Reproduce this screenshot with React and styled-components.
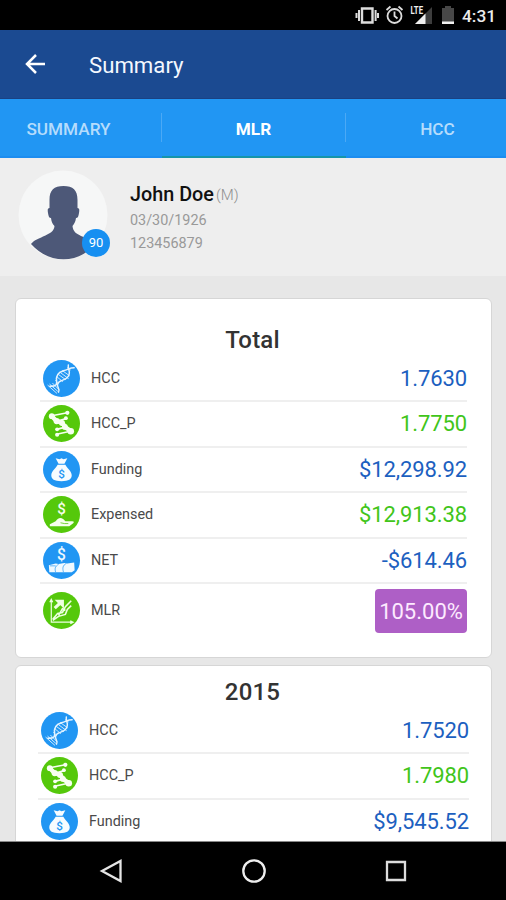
import styled, { createGlobalStyle } from "styled-components";

const GlobalStyle = createGlobalStyle`
  * {
    box-sizing: border-box;
  }

  body {
    margin: 0;
    background: #000;
    font-family: Roboto, 'Liberation Sans', sans-serif;
  }
`;

const Screen = styled.div`
  display: flex;
  flex-direction: column;
  width: 506px;
  height: 900px;
  overflow: hidden;
  background: #e7e7e7;
`;

const StatusBar = styled.div`
  display: flex;
  flex: none;
  justify-content: flex-end;
  height: 30px;
  padding-right: 10px;
  background: #000;
`;

const Clock = styled.span`
  width: 34px;
  color: #ececec;
  font-size: 17.3px;
  font-weight: 500;
  line-height: 32px;
  white-space: nowrap;
`;

const AppBar = styled.header`
  display: flex;
  flex: none;
  align-items: center;
  height: 69px;
  padding-left: 25px;
  background: #1b4a91;
  border-bottom: 1px solid #1a4283;
`;

const AppTitle = styled.h1`
  margin: 2px 0 0 43px;
  color: #f4f8ff;
  font-size: 22.2px;
  font-weight: 400;
`;

const Tabs = styled.nav`
  display: grid;
  flex: none;
  grid-template-columns: 162px 184px 1fr;
  height: 59px;
  background: #2196f3;
`;

const Tab = styled.button`
  display: flex;
  align-items: center;
  justify-content: center;
  padding: ${(props) => props.$pad || "2px 1px 0 0"};
  border: none;
  border-bottom: 2px solid ${(props) => (props.$active ? "#1695a9" : "#1c8df0")};
  background: linear-gradient(#4ba9f5, #4ba9f5) right 14px / 1px 29px no-repeat;
  background-size: ${(props) => (props.$last ? "0 0" : "1px 29px")};
  color: ${(props) => (props.$active ? "#fff" : "#b5dcfc")};
  font-family: inherit;
  font-size: 17.2px;
  font-weight: ${(props) => (props.$active ? 700 : 500)};
`;

const Profile = styled.section`
  display: flex;
  flex: none;
  height: 118px;
  padding: 12px 0 0 18px;
  background: #eee;
`;

const Avatar = styled.div`
  position: relative;
  width: 90px;
  height: 90px;
`;

const Badge = styled.span`
  position: absolute;
  left: 64px;
  top: 59px;
  width: 28px;
  height: 28px;
  border-radius: 50%;
  background: #168ff1;
  color: #fff;
  font-size: 13px;
  font-weight: 400;
  line-height: 28px;
  text-align: center;
`;

const Person = styled.div`
  display: flex;
  flex-direction: column;
  padding: 12px 0 0 22px;
`;

const Name = styled.strong`
  margin-bottom: 1px;
  color: #111;
  font-size: 19.8px;
  font-weight: 500;
  line-height: 26px;
  white-space: nowrap;
`;

const Gender = styled.span`
  margin-left: 2px;
  color: #8e8e8e;
  font-size: 15px;
  font-weight: 300;
  vertical-align: 1px;
`;

const Detail = styled.span`
  color: #999;
  font-size: 14.4px;
  font-weight: 400;
  line-height: 23px;
`;

const Cards = styled.main`
  display: flex;
  flex: 1;
  flex-direction: column;
  gap: 7px;
  min-height: 0;
  padding: 22px 14px 0 15px;
  overflow: hidden;
  border-bottom: 1px solid #888;
`;

const Card = styled.section`
  flex: none;
  height: 360px;
  padding: ${(props) => (props.$wide ? "10px 22px 0 22px" : "25px 24px 0 24px")};
  border: 1px solid #d6d6d6;
  border-radius: 6px;
  background: #fff;
`;

const CardTitle = styled.h2`
  margin: 0;
  padding-right: 2px;
  color: #333;
  font-size: 24px;
  font-weight: 500;
  line-height: 33px;
  text-align: center;
  letter-spacing: 0.2px;
`;

const Row = styled.div`
  display: flex;
  align-items: center;
  height: ${(props) => (props.$last ? 53 : 45.6)}px;
  padding-left: 3px;
  border-bottom: ${(props) => (props.$last ? 0 : 2)}px solid #efefef;

  h2 + & {
    height: 45px;
  }
`;

const Disc = styled.svg`
  flex: none;
  width: 37px;
  height: 37px;
`;

const Label = styled.span`
  flex: 1;
  margin-left: 11px;
  color: #4a4a4a;
  font-size: 14.4px;
`;

const Value = styled.span`
  color: ${(props) => (props.$green ? "#41c51a" : "#1c60c0")};
  font-size: 22px;
  letter-spacing: -0.1px;
`;

const Ratio = styled.span`
  width: 92px;
  height: 44px;
  border-radius: 4px;
  background: #ae5fc6;
  color: #fdeaff;
  font-size: 22px;
  line-height: 45px;
  text-align: center;
`;

const NavBar = styled.footer`
  display: flex;
  flex: none;
  align-items: center;
  justify-content: space-between;
  height: 58px;
  padding: 0 98px 0 99px;
  background: #000;
`;

function Dna() {
  return (
    <g fill="none" stroke="#e3f3ff" strokeLinecap="round">
      <path strokeWidth="1.5" d="M26 5c-1 5 4 8-1 13-4 4-9 2-10 7-1 3 3 5 1 8M32 8c-5 0-6 2-11 3-7 2-8 7-7 12 0 4-3 4-7 4" />
      <path strokeWidth=".9" d="m25 8 3 2m-8 1 7 5m-9-3 8 6m-10-4 7 5m-9-3 6 5m-7-1 2 2m-5 1 6 6m-9-5 8 7m-10-6 9 8" />
    </g>
  );
}

function Genes() {
  return (
    <g fill="#f7fff1" stroke="#f7fff1" strokeWidth="1.7">
      <path fill="none" d="m9 11 16-3M13 17l11-3M14 25l8-2M14 30l14-3" />
      <path fill="none" strokeWidth="4.400" d="m9 11.500 5 5 6 2 3 4.500 6 4" />
      <g stroke="none">
        <circle cx="9" cy="11.500" r="3" />
        <circle cx="25" cy="8" r="2.2" />
        <circle cx="14" cy="16.500" r="3.2" />
        <circle cx="23.500" cy="13.5" r="2" />
        <circle cx="19.500" cy="18.500" r="3" />
        <circle cx="22.500" cy="22.500" r="3" />
        <circle cx="28.500" cy="27" r="3.400" />
        <circle cx="14.500" cy="25" r="2" />
        <circle cx="14.500" cy="30.5" r="2.1" />
      </g>
    </g>
  );
}

function MoneyBag() {
  return (
    <>
      <path fill="#f7fcff" d="m13 7.500 4 1 2-1 2 1 4-1-3 5.500h-6zM15 14h8c1 3 6.500 6 6.500 11 0 4-3 6-10.500 6S8.500 29 8.500 25c0-5 5.500-8 6.500-11" />
      <text x="19" y="27.5" fill="#2196f3" fontSize="12" fontWeight="500" textAnchor="middle">$</text>
    </>
  );
}

function Hand() {
  return (
    <>
      <text x="19" y="18.5" fill="#f5ffed" fontSize="15.500" fontWeight="500" textAnchor="middle">$</text>
      <path fill="#f5ffed" d="m7 29 6-3c3-4 5-4 8-2l2 2h7c2 0 2 1 1 2l-4 3H7z" />
      <path fill="none" stroke="#55c80b" strokeWidth=".8" d="m18 27.500 4 .8h4" />
    </>
  );
}

function Bills() {
  return (
    <>
      <text x="19" y="18" fill="#f0f9ff" fontSize="16" fontWeight="500" textAnchor="middle">$</text>
      <path fill="#f0f9ff" d="m6 24 7-2 3 .5 6-1 3 .5 7-1 .5 8-3 2H6.500z" />
      <path fill="none" stroke="#2196f3" strokeWidth=".7" d="M16 23c-4 2-4 5-3 8m11-9c-4 2-4 5-3 9M7 24.500h6" />
    </>
  );
}

function Growth() {
  return (
    <g fill="none" stroke="#edffe1">
      <path strokeWidth="1.2" d="M8.5 8v23H30M7 10.500l1.500-3 1.500 3m18 19 3 1.500-3 1.500" />
      <path strokeWidth="3.300" d="m12 16.500 6-5.500" />
      <path fill="#edffe1" stroke="none" d="M12 8h9.500v9l-3-3-3.500-3z" />
      <path strokeWidth="1.600" d="m10 28 5-6 5-1 3-6 6-6M10 29l6-4 7-2 2-5 4-4M16 24l4-7 3 2" />
    </g>
  );
}

const glyphs = {
  HCC: Dna,
  HCC_P: Genes,
  Funding: MoneyBag,
  Expensed: Hand,
  NET: Bills,
  MLR: Growth,
};

const total = [
  ["HCC", "1.7630"],
  ["HCC_P", "1.7750"],
  ["Funding", "$12,298.92"],
  ["Expensed", "$12,913.38"],
  ["NET", "-$614.46"],
  ["MLR", "105.00%"],
];

const year = [
  ["HCC", "1.7520"],
  ["HCC_P", "1.7980"],
  ["Funding", "$9,545.52"],
];

function Metrics({ rows }) {
  return rows.map(([label, value], i) => {
    const Glyph = glyphs[label];
    const green = i % 2 === 1;
    const isRatio = label === "MLR";

    return (
      <Row key={label} $last={isRatio}>
        <Disc viewBox="0 0 38 38">
          <circle cx="19" cy="19" r="19" fill={green ? "#55c80b" : "#2196f3"} />
          <Glyph />
        </Disc>
        <Label>{label}</Label>
        {isRatio ? <Ratio>{value}</Ratio> : <Value $green={green}>{value}</Value>}
      </Row>
    );
  });
}

function StatusIcons() {
  return (
    <svg width="107" height="30" viewBox="355 0 107 30">
      {/* vibrate */}
      <path fill="none" stroke="#ddd" strokeWidth="2.4" d="M362 8.500h10.500v14H362z" />
      <path stroke="#ddd" strokeWidth="2" d="M359 10v11M375.600 10v11M356.500 13v5M378 13v5" />
      {/* alarm */}
      <g fill="none" stroke="#ddd" strokeWidth="1.800">
        <circle cx="394.500" cy="16" r="7" />
        <path d="m386.500 10 4-3.500m8 0 4 3.500M394.500 11.500V16l3 2.500" />
      </g>
      {/* signal */}
      <path fill="#3d3d3d" d="M432 7v17h-17z" />
      <path fill="#eee" d="M425.500 13.500V24H415z" />
      <text x="410.500" y="14" fill="#eee" fontSize="10" fontWeight="700" textLength="12.500" lengthAdjust="spacingAndGlyphs">LTE</text>
      {/* battery */}
      <path fill="#474747" d="M442 8h3V6h6v2h3v16h-12z" />
      <path fill="#f2f2f2" d="M442 21.500h12V24h-12z" />
    </svg>
  );
}

export default function App() {
  return (
    <Screen>
      <GlobalStyle />
      <StatusBar>
        <StatusIcons />
        <Clock>4:31</Clock>
      </StatusBar>

      <AppBar>
        <svg width="21" height="22" viewBox="0 0 21 22" fill="none" stroke="#fff" strokeWidth="2.5">
          <path d="M20 11H2M11 2l-9 9 9 9" />
        </svg>
        <AppTitle>Summary</AppTitle>
      </AppBar>

      <Tabs>
        <Tab $pad="2px 25px 0 0">SUMMARY</Tab>
        <Tab $active>MLR</Tab>
        <Tab $last $pad="2px 0 0 23px">HCC</Tab>
      </Tabs>

      <Profile>
        <Avatar>
          <svg width="90" height="90" viewBox="0 0 90 90">
            <circle cx="45" cy="45" r="44.500" fill="#f6f7f7" />
            <path
              fill="#4d5878"
              d="M31.500 30C31.500 20 36 16 45.500 16S59.500 20 59.500 30v8c2 0 2 2 1.500 5-.5 3-1 5-3 5-.5 4-2 6-3.500 8 .5 6 4 8 11 11 6 3 9.500 4 11.500 7-8 10-19 15.300-31.500 15.300S22 84 13 74c3-4 7-5 12-7.500 7-3 11-5 11.500-10.500-2-2-3-4-3.500-8-2 0-2.500-2-3-5-.5-3-.5-5 1.500-5z"
            />
          </svg>
          <Badge>90</Badge>
        </Avatar>
        <Person>
          <Name>
            John Doe<Gender>(M)</Gender>
          </Name>
          <Detail>03/30/1926</Detail>
          <Detail>123456879</Detail>
        </Person>
      </Profile>

      <Cards>
        <Card>
          <CardTitle>Total</CardTitle>
          <Metrics rows={total} />
        </Card>
        <Card $wide>
          <CardTitle>2015</CardTitle>
          <Metrics rows={year} />
        </Card>
      </Cards>

      <NavBar>
        <svg width="25" height="26" viewBox="0 0 25 26" fill="none" stroke="#e5e5e5" strokeWidth="2.3">
          <path d="M21.500 3v20L3 13z" />
        </svg>
        <svg width="26" height="26" viewBox="0 0 26 26" fill="none" stroke="#eee" strokeWidth="2.3">
          <circle cx="13" cy="13" r="10.700" />
        </svg>
        <svg width="24" height="26" viewBox="0 0 24 26" fill="none" stroke="#ddd" strokeWidth="2.3">
          <path d="M3 4h18v18H3z" />
        </svg>
      </NavBar>
    </Screen>
  );
}
